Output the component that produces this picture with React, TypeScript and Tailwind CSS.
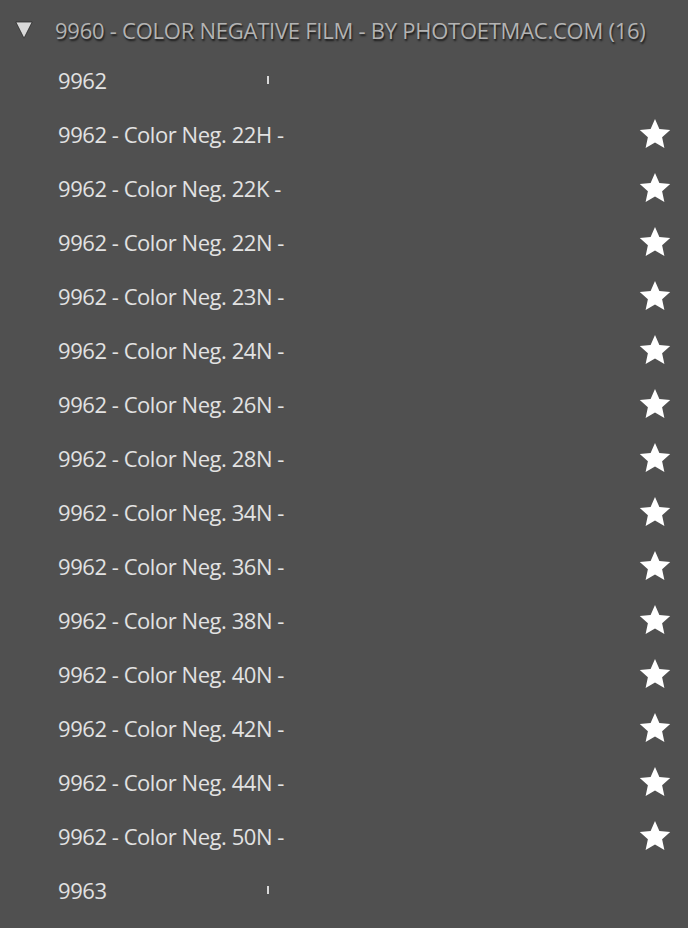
import React from 'react';

const presets = ['22H', '22K', '22N', '23N', '24N', '26N', '28N', '34N', '36N', '38N', '40N', '42N', '44N', '50N'];

const Star = () => (
  <svg className="w-[32px] h-[32px]" viewBox="0 0 24 24" fill="#ffffff">
    <path d="M12 0.7L15.29 8.17L23.41 8.99L17.33 14.43L19.05 22.41L12 18.3L4.95 22.41L6.67 14.43L0.59 8.99L8.71 8.17Z" />
  </svg>
);

const Row = ({ label, star, tick }: { label: string; star?: boolean; tick?: boolean }) => (
  <div className="relative flex items-center h-[54px] pl-[58px] pr-[17px]">
    <span className="text-[22px] text-[#e2e2e2] leading-none tracking-[-0.45px]">{label}</span>
    {tick && <span className="absolute left-[267px] top-[23px] w-[2px] h-[8px] bg-[#d8d8d8]" />}
    {star && (
      <span className="ml-auto flex items-center">
        <Star />
      </span>
    )}
  </div>
);

export default function App() {
  return (
    <div
      className="w-[688px] h-[928px] overflow-hidden bg-[#505050]"
      style={{ fontFamily: '"Open Sans", "Noto Sans", sans-serif' }}
    >
      <div className="flex items-center h-[53px] pt-[6px] pl-[15px]">
        <svg className="w-[18px] h-[18px] mr-[22px]" viewBox="0 0 18 18">
          <path d="M0.8 1h16.4L9 17.2z" fill="#d9d9d9" stroke="#2a2a2a" strokeWidth="0.8" />
        </svg>
        <span
          className="text-[22px] text-[#b3b3b3] leading-none tracking-[-0.25px]"
          style={{ textShadow: '1px 2px 2px rgba(0,0,0,0.7)' }}
        >
          9960 - COLOR NEGATIVE FILM - BY PHOTOETMAC.COM (16)
        </span>
      </div>
      <Row label="9962" tick />
      {presets.map((p) => (
        <Row key={p} label={`9962 - Color Neg. ${p} -`} star />
      ))}
      <Row label="9963" tick />
    </div>
  );
}
